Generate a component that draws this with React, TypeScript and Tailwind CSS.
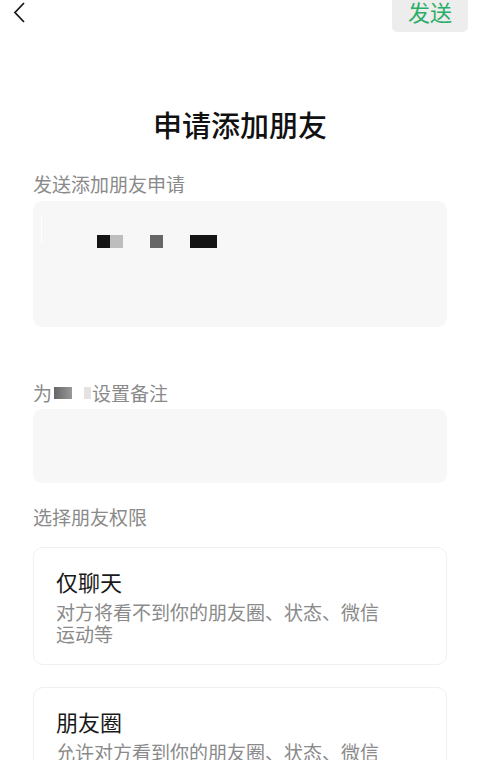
const font = { fontFamily: '"Noto Sans CJK SC", "Noto Sans", sans-serif' };

const PermissionCard = ({ title, desc }: { title: string; desc: string }) => (
  <div className="rounded-[10px] border border-[#efefef] bg-white pl-[22px] pt-[18px] pb-[19px]">
    <div className="text-[22px] leading-[30px] text-[#191919]">{title}</div>
    <div className="mt-[5px] w-[330px] text-[19px] leading-[22px] text-[#8a8a8a]">{desc}</div>
  </div>
);

export default function App() {
  return (
    <div className="min-h-[760px] w-[480px] overflow-hidden bg-white" style={font}>
      <div className="flex h-8 items-start justify-between pl-[13px] pr-3">
        <svg width="13" height="21" viewBox="0 0 13 21" className="mt-[2px]">
          <path d="M11 1 L2 10.5 L11 20" fill="none" stroke="#1a1a1a" strokeWidth="1.8" />
        </svg>
        <button className="flex h-8 w-[76px] items-start justify-center rounded-b-[5px] bg-[#ededed] text-[22px] leading-[22px] text-[#2aae67]">
          发送
        </button>
      </div>

      <h1 className="mt-[72px] text-center text-[29px] font-medium leading-[40px] text-[#111]">
        申请添加朋友
      </h1>

      <div className="px-[33px]">
        <div className="mt-[28px] text-[19px] leading-[24px] text-[#8a8a8a]">发送添加朋友申请</div>
        <div className="relative mt-[5px] h-[126px] rounded-[9px] bg-[#f7f7f7]">
          <div className="absolute left-[8px] top-[16px] h-[26px] w-[1px] bg-white" />
          <div className="flex items-center pl-[64px] pt-[34px]">
            <span className="h-[13px] w-[13px] bg-[#141414]" />
            <span className="h-[13px] w-[13px] bg-[#bdbdbd]" />
            <span className="ml-[27px] h-[13px] w-[13px] bg-[#666]" />
            <span className="ml-[27px] h-[13px] w-[27px] bg-[#141414]" />
          </div>
        </div>

        <div className="mt-[54px] flex items-center text-[19px] leading-[24px] text-[#8a8a8a]">
          <span>为</span>
          <span className="ml-[2px] h-[12px] w-[18px] bg-gradient-to-r from-[#666] to-[#999]" />
          <span className="ml-[12px] h-[12px] w-[7px] bg-[#e3e3e3]" />
          <span className="ml-[1px]">设置备注</span>
        </div>
        <div className="mt-[4px] h-[74px] rounded-[9px] bg-[#f7f7f7]" />

        <div className="mt-[22px] text-[19px] leading-[24px] text-[#8a8a8a]">选择朋友权限</div>

        <div className="mt-[18px] flex flex-col gap-[22px]">
          <PermissionCard title="仅聊天" desc="对方将看不到你的朋友圈、状态、微信运动等" />
          <PermissionCard title="朋友圈" desc="允许对方看到你的朋友圈、状态、微信运动等" />
        </div>
      </div>
    </div>
  );
}
